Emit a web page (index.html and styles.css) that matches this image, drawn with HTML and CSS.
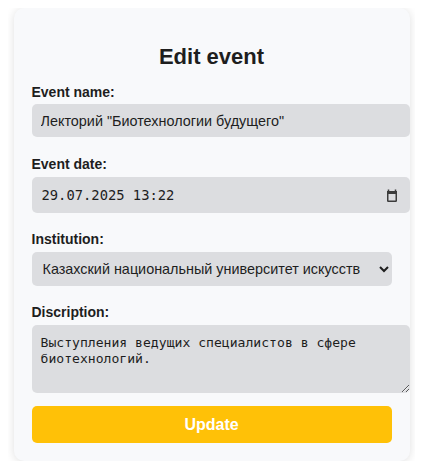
FILE: index.html
```html
<!DOCTYPE html>
<html lang="ru">
<head>
<meta charset="utf-8">
<title>Edit event</title>
<link rel="stylesheet" href="styles.css">
</head>
<body>
<div class="card">
  <h2 class="title">Edit event</h2>
  <form class="form">
    <label class="label" for="name">Event name:</label>
    <input class="field field-text" id="name" type="text" value='Лекторий "Биотехнологии будущего"'>
    <label class="label" for="date">Event date:</label>
    <div class="field field-date">
      <input class="date-input" id="date" type="text" value="29.07.2025 13:22">
      <svg class="date-icon" width="12" height="13" viewBox="0 0 12 13" aria-hidden="true">
        <rect x="1.75" y="0.5" width="1.5" height="2" fill="#3c3c3c"/>
        <rect x="8.75" y="0.5" width="1.5" height="2" fill="#3c3c3c"/>
        <rect x="1" y="2" width="10" height="3" fill="#3c3c3c"/>
        <rect x="1.75" y="2.75" width="8.5" height="9.5" fill="none" stroke="#3c3c3c" stroke-width="1.5" rx="0.5"/>
      </svg>
    </div>
    <label class="label" for="inst">Institution:</label>
    <select class="field field-select" id="inst">
      <option>Казахский национальный университет искусств</option>
    </select>
    <label class="label" for="desc">Discription:</label>
    <textarea class="field field-area" id="desc">Выступления ведущих специалистов в сфере биотехнологий.</textarea>
    <button class="btn" type="button">Update</button>
  </form>
</div>
</body>
</html>
```
FILE: styles.css
```css
html, body {
  background: #ffffff;
}
body {
  margin: 8px;
  font-family: "Liberation Sans", Arial, sans-serif;
  color: #1e1e1e;
}
.card {
  width: 360px;
  margin: 0 auto;
  padding: 18px;
  background: #f8f9fb;
  border-radius: 10px;
  box-shadow: 0 1px 10px rgba(0, 0, 0, 0.13);
}
.title {
  margin: 18px 0 15px;
  font-size: 22px;
  font-weight: bold;
  text-align: center;
  line-height: 25px;
}
.form {
  display: flex;
  flex-direction: column;
  align-items: flex-start;
}
.label {
  font-size: 14px;
  font-weight: bold;
  line-height: 16px;
  margin-bottom: 4px;
}
.field {
  box-sizing: border-box;
  border: none;
  border-radius: 5px;
  background: #dcdde0;
  color: #1e1e1e;
  margin: 0 0 19px;
  outline: none;
}
.field-text {
  width: 378px;
  height: 33px;
  padding: 0 9px;
  font-family: "Liberation Sans", Arial, sans-serif;
  font-size: 14.4px;
}
.field-date {
  display: flex;
  align-items: center;
  width: 378px;
  height: 36px;
  padding: 0 12px 0 9px;
  margin-top: 1px;
  margin-bottom: 18px;
}
.date-input {
  flex: 1;
  min-width: 0;
  border: none;
  background: transparent;
  padding: 0 0 0 1px;
  color: #1e1e1e;
  font-family: "DejaVu Sans Mono", monospace;
  font-size: 13.8px;
  outline: none;
}
.date-icon {
  flex: none;
  display: block;
}
.field-select {
  width: 360px;
  height: 34px;
  padding: 0 7px;
  font-family: "Liberation Sans", Arial, sans-serif;
  font-size: 14.4px;
  margin-top: 1px;
  margin-bottom: 18px;
}
.field-area {
  width: 378px;
  height: 68px;
  padding: 10px 9px 8px;
  font-family: "DejaVu Sans Mono", monospace;
  font-size: 13.1px;
  line-height: 16.3px;
  margin-top: 1px;
  margin-bottom: 13px;
  resize: both;
}
.btn {
  width: 360px;
  height: 37px;
  border: none;
  border-radius: 5px;
  background: #ffc107;
  color: #ffffff;
  font-family: "Liberation Sans", Arial, sans-serif;
  font-size: 16px;
  font-weight: bold;
  cursor: pointer;
}
```
